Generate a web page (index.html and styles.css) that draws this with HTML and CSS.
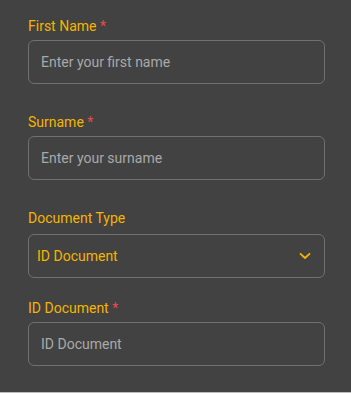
FILE: index.html
```html
<!DOCTYPE html>
<html lang="en">
<head>
<meta charset="utf-8">
<title>Form</title>
<link rel="stylesheet" href="styles.css">
</head>
<body>
<form class="form">
  <div class="field field-first">
    <label class="label" for="fn">First Name <span class="req">*</span></label>
    <input class="input" id="fn" type="text" placeholder="Enter your first name">
  </div>
  <div class="field field-second">
    <label class="label" for="sn">Surname <span class="req">*</span></label>
    <input class="input" id="sn" type="text" placeholder="Enter your surname">
  </div>
  <div class="field field-select">
    <label class="label">Document Type</label>
    <div class="select">
      <span class="select-value">ID Document</span>
      <svg class="chevron" width="12" height="8" viewBox="0 0 12 8"><path d="M1.5 1.8 L6 6 L10.5 1.8" fill="none" stroke="#f5b400" stroke-width="1.8" stroke-linecap="round" stroke-linejoin="round"/></svg>
    </div>
  </div>
  <div class="field field-last">
    <label class="label" for="idd">ID Document <span class="req">*</span></label>
    <input class="input" id="idd" type="text" placeholder="ID Document">
  </div>
</form>
</body>
</html>
```
FILE: styles.css
```css
html, body {
  margin: 0;
  padding: 0;
  background: #424242;
}
body {
  font-family: Roboto, "Noto Sans", Arial, sans-serif;
  font-size: 14px;
}
.form {
  display: flex;
  flex-direction: column;
  height: 376px;
  padding: 16px 26px 0 28px;
  border-bottom: 1px solid #bdbdbd;
  margin: 0;
}
.field {
  display: flex;
  flex-direction: column;
}
.field-first, .field-second { margin-bottom: 28px; }
.field-select { margin-bottom: 20px; }
.label {
  color: #f5b400;
  line-height: 20px;
  margin-bottom: 4px;
  font-size: 14px;
}
.field-select .label { margin-bottom: 6px; }
.req { color: #e84a4a; }
.input {
  box-sizing: border-box;
  height: 44px;
  width: 297px;
  border: 1px solid #707070;
  border-radius: 6px;
  background: transparent;
  padding: 0 12px;
  font-family: Roboto, "Noto Sans", Arial, sans-serif;
  font-size: 14px;
  color: #e0e0e0;
  outline: none;
}
.input::placeholder { color: #a9a9a9; opacity: 1; }
.select {
  box-sizing: border-box;
  height: 44px;
  width: 297px;
  border: 1px solid #707070;
  border-radius: 6px;
  display: flex;
  align-items: center;
  justify-content: space-between;
  padding: 0 13px 0 8px;
}
.select-value {
  color: #f5b400;
  font-size: 14px;
}
.chevron { display: block; }
```
